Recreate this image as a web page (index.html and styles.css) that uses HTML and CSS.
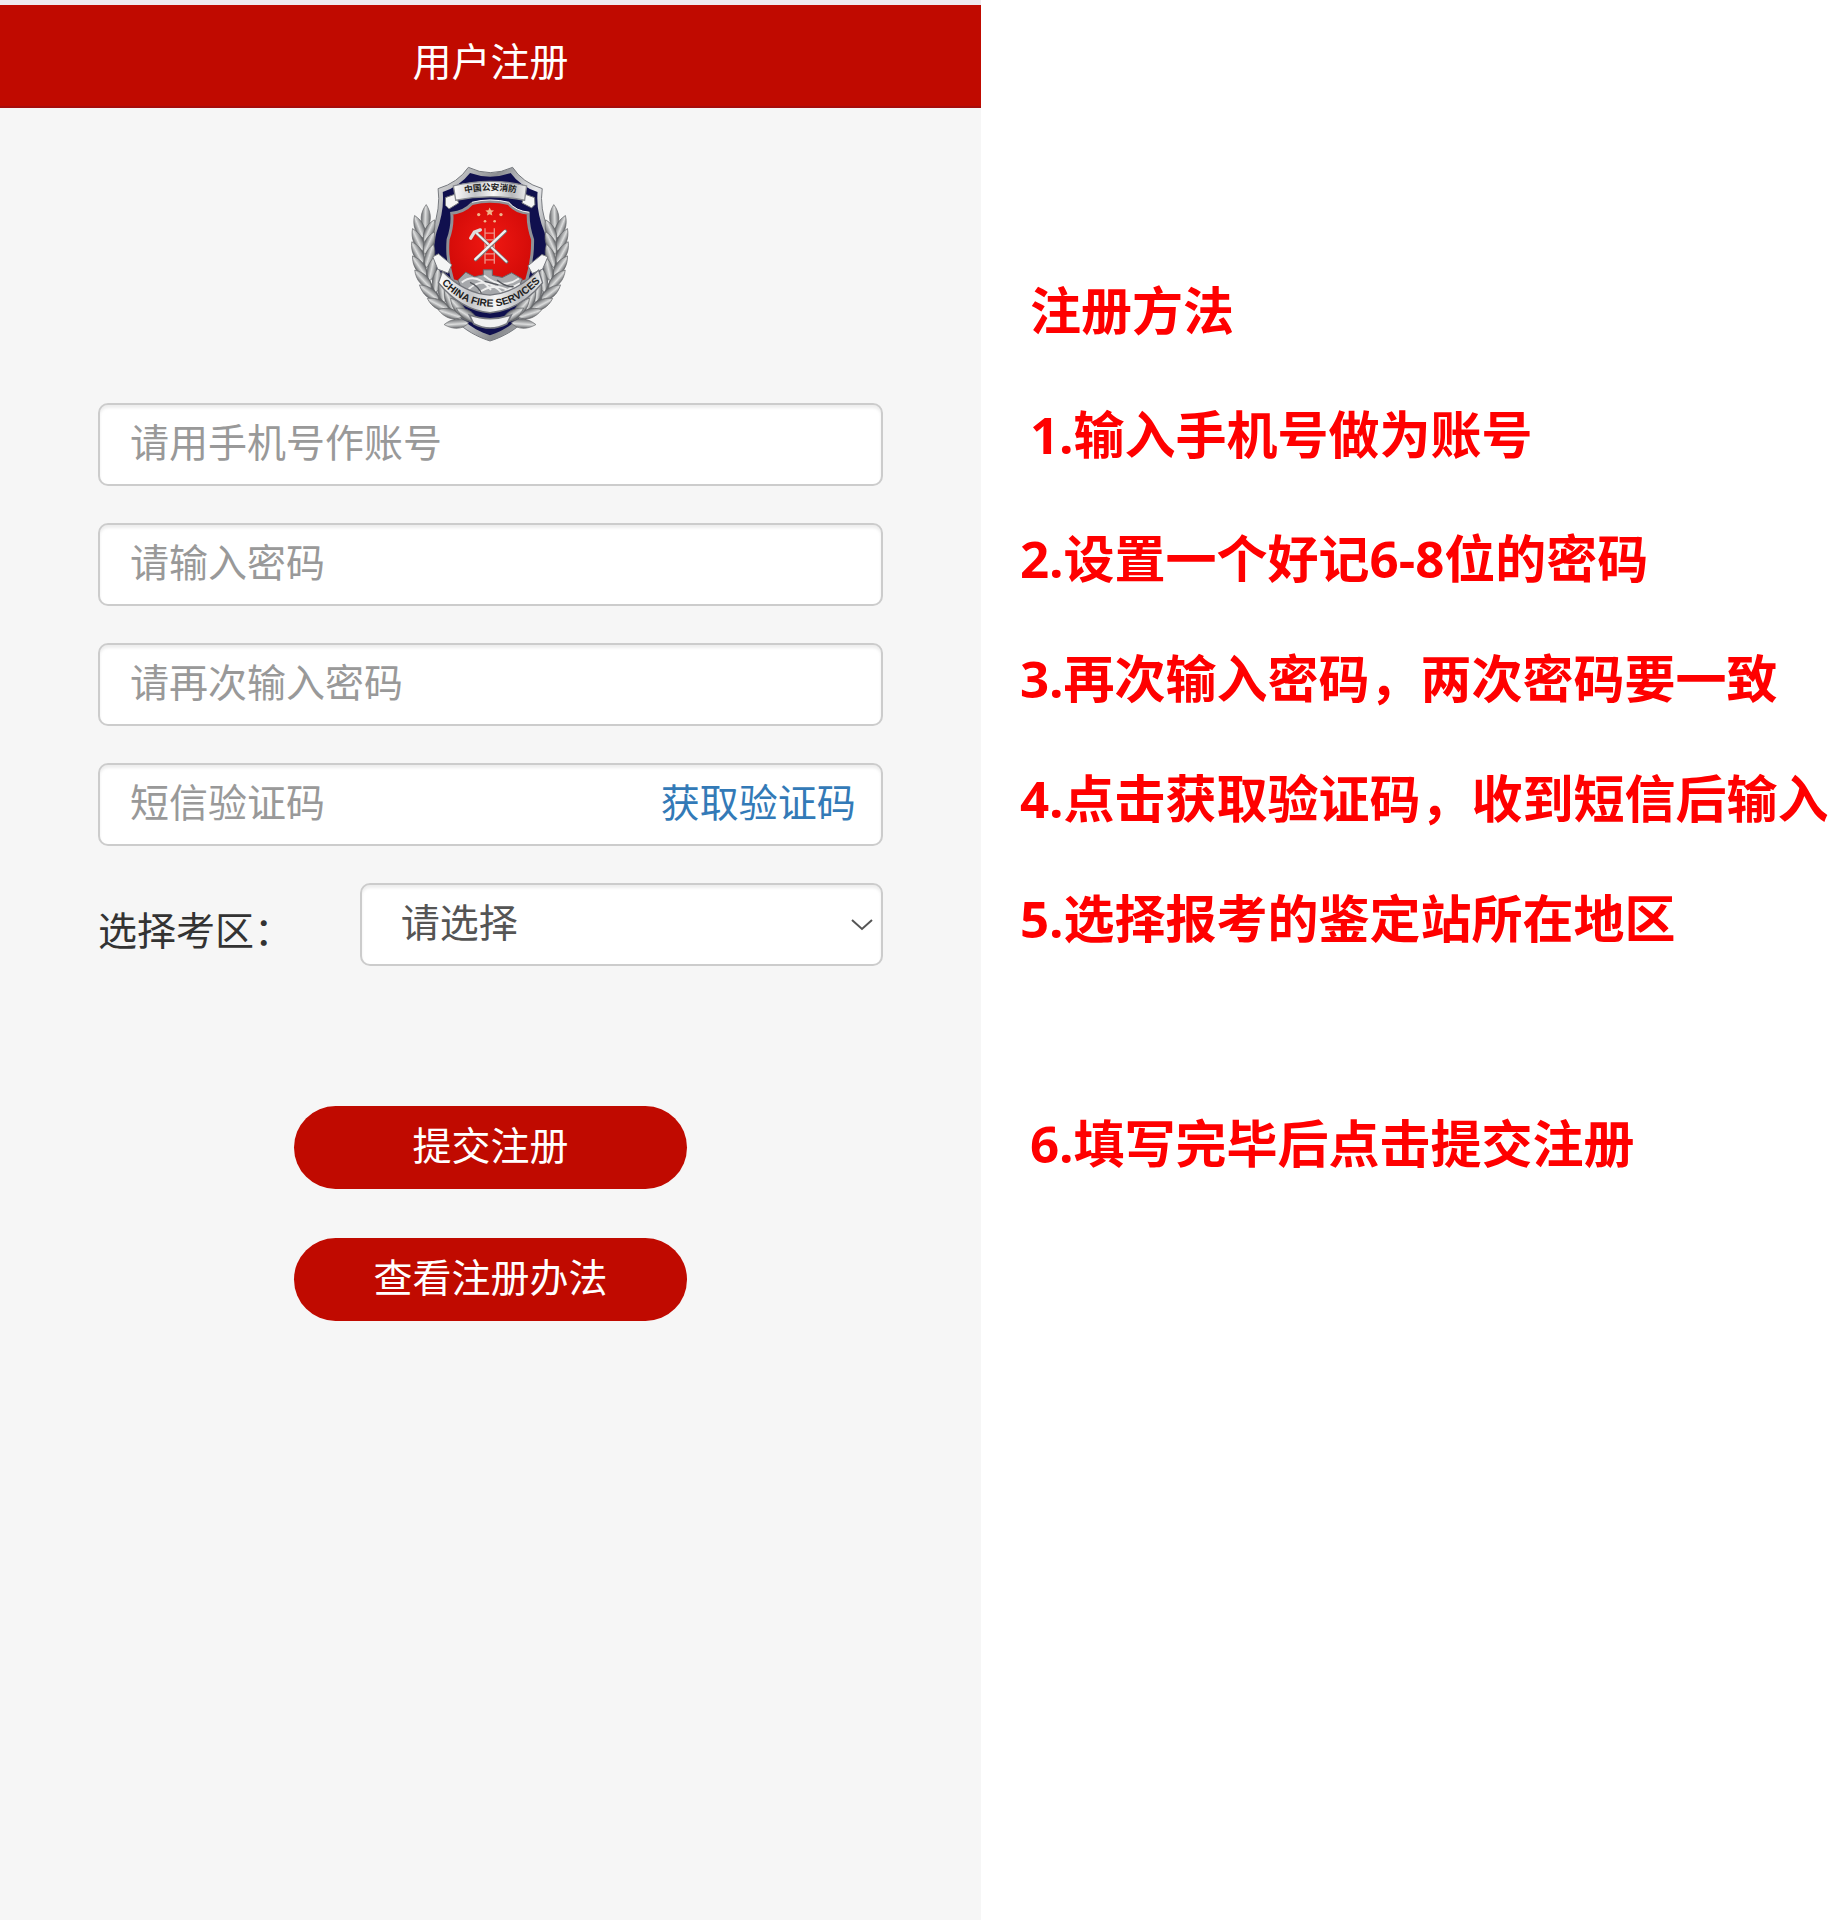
FILE: index.html
```html
<!DOCTYPE html>
<html lang="zh-CN">
<head>
<meta charset="utf-8">
<meta name="viewport" content="width=device-width, initial-scale=1">
<title>用户注册</title>
<link rel="stylesheet" href="styles.css">
</head>
<body>
<div class="page">
  <main class="panel">
    <header class="panel-header"><h1 class="panel-title">用户注册</h1></header>
    <form class="form">
      <svg class="emblem" viewBox="60 45 480 535" role="img" aria-label="中国公安消防">
        <defs>
          <linearGradient id="silver" x1="0" y1="0" x2="1" y2="1">
            <stop offset="0" stop-color="#f2f2f2"/><stop offset=".3" stop-color="#8b8d91"/>
            <stop offset=".5" stop-color="#e9eaec"/><stop offset=".75" stop-color="#85878b"/><stop offset="1" stop-color="#d5d6d8"/>
          </linearGradient>
          <linearGradient id="leafFill" x1="0" y1="0" x2="1" y2="0">
            <stop offset="0" stop-color="#66686b"/><stop offset=".45" stop-color="#dcdddd"/><stop offset="1" stop-color="#6c6e71"/>
          </linearGradient>
          <linearGradient id="ribbon" x1="0" y1="0" x2="1" y2="0">
            <stop offset="0" stop-color="#fff"/><stop offset=".3" stop-color="#c4c5c8"/><stop offset=".55" stop-color="#f6f6f6"/>
            <stop offset=".8" stop-color="#b8b9bc"/><stop offset="1" stop-color="#ececec"/>
          </linearGradient>
          <radialGradient id="redFill" cx=".5" cy=".45" r=".65">
            <stop offset="0" stop-color="#f01812"/><stop offset="1" stop-color="#cc0806"/>
          </radialGradient>
          <path id="leaf" d="M0 8C-20-12-17-42 0-66C17-42 20-12 0 8Z" fill="url(#leafFill)" stroke="#66686b" stroke-width="2"/>
          <g id="branch">
            <path d="M285 520C190 510 105 440 96 310Q92 250 104 200" fill="none" stroke="#66686b" stroke-width="12"/>
            <use href="#leaf" transform="translate(106 230) rotate(2)"/>
            <use href="#leaf" transform="translate(98 258) rotate(-22)"/>
            <use href="#leaf" transform="translate(106 270) rotate(24)"/>
            <use href="#leaf" transform="translate(95 296) rotate(-25)"/>
            <use href="#leaf" transform="translate(106 306) rotate(24)"/>
            <use href="#leaf" transform="translate(96 334) rotate(-28)"/>
            <use href="#leaf" transform="translate(110 346) rotate(18)"/>
            <use href="#leaf" transform="translate(104 373) rotate(-34)"/>
            <use href="#leaf" transform="translate(120 385) rotate(12)"/>
            <use href="#leaf" transform="translate(118 410) rotate(-42)"/>
            <use href="#leaf" transform="translate(138 420) rotate(6)"/>
            <use href="#leaf" transform="translate(140 446) rotate(-52)"/>
            <use href="#leaf" transform="translate(162 450) rotate(-8)"/>
            <use href="#leaf" transform="translate(170 477) rotate(-62)"/>
            <use href="#leaf" transform="translate(190 476) rotate(-22)"/>
            <use href="#leaf" transform="translate(207 500) rotate(-72)"/>
            <use href="#leaf" transform="translate(224 496) rotate(-40)"/>
            <use href="#leaf" transform="translate(228 520) rotate(-94)"/>
            <use href="#leaf" transform="translate(255 510) rotate(-58)"/>
          </g>
          <path id="topArc" d="M208 133Q300 110 396 131"/>
          <path id="lowArc" d="M152 398Q218 469 300 471Q382 470 454 392"/>
        </defs>
        <path d="M235 52Q300 84 368 52Q397 98 457 116Q448 174 476 243C504 350 467 521 300 574C133 521 96 350 127 243Q152 174 144 116Q204 98 235 52Z" fill="url(#silver)" stroke="#777a80" stroke-width="3"/>
        <path d="M240 69Q300 91 362 69Q391 109 443 126Q438 183 464 248C488 350 450 505 300 557C150 505 112 350 139 248Q163 183 158 126Q209 109 240 69Z" fill="#10104e"/>
        <use href="#branch"/>
        <use href="#branch" transform="translate(600 0) scale(-1 1)"/>
        <path d="M166 143l28-10 12 26-29 18-11-11ZM434 143l-28-10-10 26 29 15 10-10Z" fill="#f5f5f5" stroke="#707278" stroke-width="3"/>
        <path d="M190 108Q300 80 410 108L404 151Q300 130 197 151Z" fill="url(#ribbon)" stroke="#8a8c91" stroke-width="4"/>
        <text class="emblem-zh"><textPath href="#topArc" startOffset="50%">中国公安消防</textPath></text>
        <path d="M246 161Q300 147 356 161Q378 187 415 190Q413 226 428 269Q429 331 410 392L300 430L188 392Q169 331 174 269Q189 226 185 190Q222 187 246 161Z" fill="url(#redFill)" stroke="#8f9197" stroke-width="9"/>
        <path d="M246 157Q300 143 356 157Q378 183 417 187" fill="none" stroke="#f4f4f4" stroke-width="3"/>
        <g fill="#f0b48c">
          <path d="M299 173l4 8 9 1-7 6 2 9-8-4-8 4 2-9-7-6 9-1Z"/>
          <circle cx="266" cy="194" r="5"/><circle cx="333" cy="194" r="5"/><circle cx="285" cy="214" r="4"/><circle cx="314" cy="214" r="4"/>
        </g>
        <path d="M285 235V342M313 235V342M285 250h28M285 270h28M285 290h28M285 312h28M285 330h28" fill="none" stroke="#ed9187" stroke-width="4"/>
        <g fill="none" stroke-linecap="round">
          <path d="M260 250L350 336" stroke="#777" stroke-width="10"/><path d="M260 250L349 335" stroke="#eee" stroke-width="6"/>
          <path d="M346 244L257 329" stroke="#777" stroke-width="11"/><path d="M345 244L256 328" stroke="#f2f2f2" stroke-width="7"/>
          <path d="M242 265L253 247L271 240" stroke="#ddd" stroke-width="10"/>
        </g>
        <path d="M204 391L227 367L253 381L280 375V360H307V377L337 383L365 369L397 388L379 432L300 459L220 432Z" fill="#a6a8ab" stroke="#67696e" stroke-width="3"/>
        <path d="M215 398Q258 365 303 420M236 418Q283 374 339 432M282 377Q335 422 387 386M263 432Q310 394 360 425M318 439L390 401" fill="none" stroke="#eee" stroke-width="6"/>
        <path d="M240 398Q268 410 276 437M321 391Q348 412 371 411M284 395L325 405" fill="none" stroke="#56585e" stroke-width="4"/>
        <path d="M128 321L145 312L185 345L174 370L143 358ZM474 321L456 314L414 348L427 371L458 358Z" fill="#f5f5f5" stroke="#77797e" stroke-width="3"/>
        <path d="M157 365Q224 431 300 436Q376 431 446 361L458 399Q391 481 300 489Q213 482 145 399Z" fill="url(#ribbon)" stroke="#74767c" stroke-width="4"/>
        <text class="emblem-en"><textPath href="#lowArc" startOffset="50%">CHINA FIRE SERVICES</textPath></text>
        <path d="M238 496Q300 518 364 496L351 522Q300 548 251 522Z" fill="#f1f1f1" stroke="#777980" stroke-width="5"/>
      </svg>

      <div class="field">
        <input class="field-input" type="tel" placeholder="请用手机号作账号" aria-label="手机号">
      </div>
      <div class="field">
        <input class="field-input" type="password" placeholder="请输入密码" aria-label="密码">
      </div>
      <div class="field">
        <input class="field-input" type="password" placeholder="请再次输入密码" aria-label="再次输入密码">
      </div>
      <div class="field">
        <input class="field-input" type="text" placeholder="短信验证码" aria-label="短信验证码">
        <a class="code-link" href="#code">获取验证码</a>
      </div>
      <div class="area">
        <label class="area-label" for="area">选择考区：</label>
        <div class="field area-field">
          <select class="area-select" id="area"><option>请选择</option></select>
          <svg class="chevron" viewBox="0 0 22 12" aria-hidden="true"><path d="M1 1l10 9L21 1"/></svg>
        </div>
      </div>
      <div class="actions">
        <button class="btn" type="submit">提交注册</button>
        <button class="btn" type="button">查看注册办法</button>
      </div>
    </form>
  </main>

  <aside class="notes">
    <h2 class="note note-inset">注册方法</h2>
    <p class="note note-inset note-wide">1.输入手机号做为账号</p>
    <p class="note note-wide">2.设置一个好记6-8位的密码</p>
    <p class="note">3.再次输入密码，两次密码要一致</p>
    <p class="note">4.点击获取验证码，收到短信后输入</p>
    <p class="note">5.选择报考的鉴定站所在地区</p>
    <p class="note note-inset note-last">6.填写完毕后点击提交注册</p>
  </aside>
</div>
</body>
</html>
```

FILE: styles.css
```css
* {
  box-sizing: border-box;
}

body {
  margin: 0;
  background: #fff;
  font-family: "Noto Sans CJK SC", sans-serif;
  font-size: 39px;
}

.page {
  display: grid;
  grid-template-columns: minmax(0, 15fr) minmax(0, 13fr);
  min-height: 100vh;
}

.panel {
  background: #f6f6f6;
}

.panel-header {
  padding: 27px 0 19px;
  border-top: 5px solid #efeaee;
  border-bottom: 2px solid #a50d0d;
  background: #c00a00;
  color: #fff;
  text-align: center;
}

.panel-title {
  margin: 0;
  font-size: 39px;
  font-weight: 400;
  line-height: 55px;
}

.form {
  display: flex;
  flex-direction: column;
  gap: 37px;
  padding: 57px 10%;
}

.emblem {
  align-self: center;
  width: 160px;
  height: 178px;
  margin-bottom: 23px;
}

.emblem-zh,
.emblem-en {
  fill: #222;
  font-weight: 700;
  text-anchor: middle;
}

.emblem-zh {
  font-size: 26px;
}

.emblem-en {
  font-family: "Liberation Sans", sans-serif;
  font-size: 31px;
}

.field {
  display: flex;
  height: 83px;
  border: 2px solid #ccc;
  border-radius: 10px;
  background: #fff;
  box-shadow: inset 0 3px 3px rgba(0, 0, 0, 0.07);
}

.field-input {
  flex: 1;
  min-width: 0;
  padding: 0 30px 10px;
  border: 0;
  background: transparent;
  color: #555;
  font: inherit;
}

.field-input::placeholder {
  color: #999;
  opacity: 1;
}

.code-link {
  padding: 0 25px 8px 0;
  color: #337ab7;
  line-height: 71px;
  text-decoration: none;
}

.area {
  display: grid;
  grid-template-columns: 1fr 2fr;
}

.area-label {
  padding-top: 8px;
  color: #333;
  line-height: 75px;
  white-space: nowrap;
}

.area-field {
  align-items: center;
  padding-right: 8px;
}

.area-select {
  flex: 1;
  min-width: 0;
  height: 100%;
  padding: 0 0 10px 39px;
  border: 0;
  background: transparent;
  appearance: none;
  color: #555;
  font: inherit;
}

.chevron {
  width: 22px;
  height: 12px;
  fill: none;
  stroke: #555;
  stroke-width: 2;
}

.actions {
  display: flex;
  flex-direction: column;
  align-items: center;
  gap: 49px;
  margin-top: 103px;
}

.btn {
  width: 50%;
  height: 83px;
  padding: 0 0 10px;
  border: 0;
  border-radius: 42px;
  background: #c00a00;
  color: #fff;
  font: inherit;
  white-space: nowrap;
}

.notes {
  padding: 275px 0 0 39px;
  color: #f00;
  font-family: "Open Sans", "Noto Sans CJK SC", sans-serif;
}

.note {
  margin: 50px 0 0;
  font-size: 51px;
  font-weight: 700;
  line-height: 70px;
  white-space: nowrap;
}

h2.note {
  margin-top: 0;
}

.note-inset {
  padding-left: 10px;
}

.note-wide {
  margin-top: 54px;
}

.note-last {
  margin-top: 155px;
}
```
